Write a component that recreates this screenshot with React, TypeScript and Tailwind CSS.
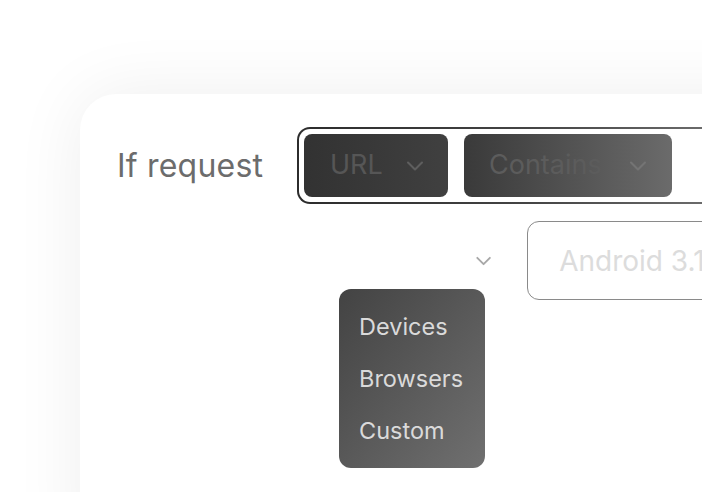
import React from 'react';

const Chevron: React.FC<{ className?: string }> = ({ className }) => (
  <svg
    width="28"
    height="28"
    viewBox="0 0 24 24"
    fill="none"
    stroke="currentColor"
    strokeWidth="1.8"
    strokeLinecap="round"
    strokeLinejoin="round"
    className={className}
  >
    <path d="m6 9 6 6 6-6" />
  </svg>
);

const menuItems = ['Devices', 'Browsers', 'Custom'];

export default function App() {
  return (
    <div
      className="w-[702px] h-[492px] overflow-hidden bg-white pl-[80px] pt-[94px]"
      style={{ fontFamily: 'Inter, "Noto Sans", sans-serif' }}
    >
      <div className="relative w-[720px] h-[460px] bg-white rounded-tl-[36px] shadow-[0_0_70px_rgba(0,0,0,0.07)] pt-[33px] pl-[37px]">
        {/* Row 1 */}
        <div className="flex items-center">
          <span className="w-[180px] text-[32px] text-[#6c6c6c] tracking-[0.2px]">If request</span>
          <div className="rounded-[13px] p-[2px] bg-gradient-to-r from-[#2c2c2c] via-[#444] to-[#777] w-[460px]">
            <div className="flex gap-[16px] rounded-[11px] bg-white p-[5px]">
              <div className="flex w-[144px] h-[63px] items-center justify-between rounded-[8px] bg-gradient-to-r from-[#323232] to-[#404040] pl-[26px] pr-[19px]">
                <span className="text-[27px] text-[#565656]">URL</span>
                <Chevron className="text-[#5e5e5e]" />
              </div>
              <div className="flex w-[208px] h-[63px] items-center justify-between rounded-[8px] bg-gradient-to-r from-[#3a3a3a] to-[#6b6b6b] pl-[25px] pr-[20px]">
                <span className="text-[27px] text-[#5c5c5c]">Contains</span>
                <Chevron className="text-[#747474]" />
              </div>
            </div>
          </div>
        </div>

        {/* Row 2 */}
        <div className="flex items-center mt-[17px] pl-[354px]">
          <Chevron className="text-[#a8a8a8]" />
          <div className="ml-[31px] flex h-[79px] w-[300px] items-center rounded-[12px] border-[1.5px] border-[#8a8a8a] pl-[31px]">
            <span className="text-[28px] text-[#dcdcdc]">Android 3.1</span>
          </div>
        </div>

        {/* Dropdown menu */}
        <div className="absolute left-[259px] top-[195px] w-[146px] h-[179px] rounded-[12px] bg-gradient-to-br from-[#434343] to-[#707070] pt-[12px] pl-[20px] flex flex-col">
          {menuItems.map(item => (
            <div key={item} className="h-[52px] flex items-center text-[23.5px] text-[#dadada]">
              {item}
            </div>
          ))}
        </div>
      </div>
    </div>
  );
}
